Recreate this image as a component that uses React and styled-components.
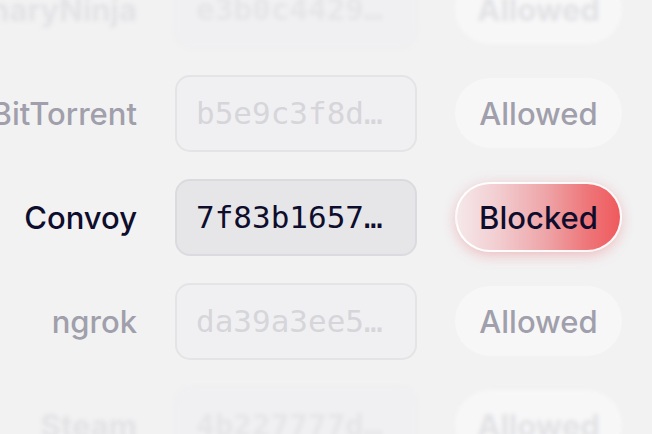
import React from "react";
import styled, { createGlobalStyle, css } from "styled-components";

const GlobalStyle = createGlobalStyle`
  html, body {
    margin: 0;
    padding: 0;
    background: #f2f2f3;
  }
  body {
    font-family: Inter, "Noto Sans", sans-serif;
  }
`;

const Wheel = styled.div`
  height: 100vh;
  overflow: hidden;
  display: flex;
  flex-direction: column;
  justify-content: center;
  gap: 27px;
`;

const Row = styled.div`
  flex-shrink: 0;
  height: 77px;
  display: grid;
  grid-template-columns: 107px 242px 167px;
  column-gap: 38px;
  align-items: center;
  justify-content: center;
  ${(p) =>
    p.$state === "far" &&
    css`
      filter: blur(2.2px);
    `}
`;

const nameColors = {
  active: "#0f0d2c",
  idle: "#a09fab",
  far: "#e2e2e5",
};

const Name = styled.div`
  display: flex;
  justify-content: flex-end;
  white-space: nowrap;
  font-size: 31px;
  font-weight: 500;
  color: ${(p) => nameColors[p.$state]};
  ${(p) =>
    p.$state === "far" &&
    css`
      font-weight: 700;
    `}
`;

const Hash = styled.div`
  box-sizing: border-box;
  height: 77px;
  display: flex;
  align-items: center;
  padding: 0 19px;
  border-radius: 15px;
  font-family: "DejaVu Sans Mono", "Liberation Mono", monospace;
  font-size: 31px;
  white-space: nowrap;
  overflow: hidden;
  ${(p) =>
    p.$state === "active"
      ? css`
          background: #e6e6e9;
          border: 2px solid #dbdbdf;
          color: #0f0d2c;
        `
      : p.$state === "idle"
      ? css`
          background: #f0f0f2;
          border: 2px solid #e4e4e7;
          color: #d6d6da;
        `
      : css`
          background: #f0f0f2;
          border: 2px solid #eeeef0;
          color: #e5e5e8;
          font-weight: 700;
        `}
`;

const Pill = styled.div`
  box-sizing: border-box;
  height: 70px;
  border-radius: 35px;
  display: flex;
  align-items: center;
  justify-content: center;
  font-size: 31px;
  font-weight: 500;
  white-space: nowrap;
  ${(p) =>
    p.$blocked
      ? css`
          color: #0f0d2c;
          border: 2px solid rgba(255, 255, 255, 0.95);
          background: linear-gradient(
            90deg,
            #f5e8ea 0%,
            #f2cdd0 25%,
            #eea4a7 55%,
            #ee7679 80%,
            #ef5a5d 100%
          );
          box-shadow: 0 6px 16px -4px rgba(236, 84, 88, 0.3),
            0 0 14px rgba(236, 90, 94, 0.14);
        `
      : css`
          color: ${p.$state === "far" ? "#e2e2e5" : "#a09fab"};
          background: #f7f7f8;
          ${p.$state === "far" && "font-weight: 700;"}
        `}
`;

const rows = [
  { name: "BinaryNinja", hash: "e3b0c4429…", status: "Allowed", state: "far" },
  { name: "BitTorrent", hash: "b5e9c3f8d…", status: "Allowed", state: "idle" },
  { name: "Convoy", hash: "7f83b1657…", status: "Blocked", state: "active" },
  { name: "ngrok", hash: "da39a3ee5…", status: "Allowed", state: "idle" },
  { name: "Steam", hash: "4b227777d…", status: "Allowed", state: "far" },
];

export default function App() {
  return (
    <>
      <GlobalStyle />
      <Wheel>
        {rows.map((r) => (
          <Row key={r.name} $state={r.state}>
            <Name $state={r.state}>{r.name}</Name>
            <Hash $state={r.state}>{r.hash}</Hash>
            <Pill $state={r.state} $blocked={r.status === "Blocked"}>
              {r.status}
            </Pill>
          </Row>
        ))}
      </Wheel>
    </>
  );
}
